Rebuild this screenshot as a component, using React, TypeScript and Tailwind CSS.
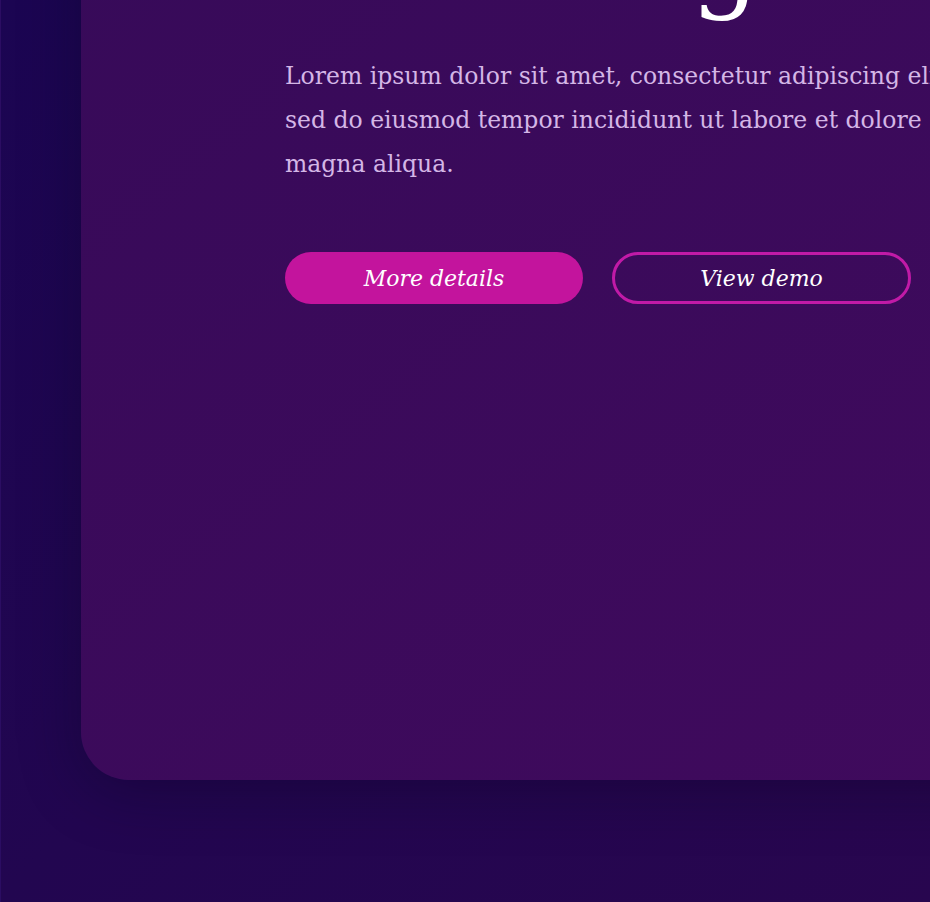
export default function App() {
  return (
    <div className="h-[902px] w-full overflow-hidden border-l border-[#2b0d62] bg-gradient-to-br from-[#1b0552] via-[#220650] to-[#28064f] pl-[80px] font-['DejaVu_Serif',serif]">
      <div className="w-[1100px] rounded-bl-[48px] bg-gradient-to-br from-[#370a59] to-[#400a5d] pb-[476px] pl-[204px] shadow-[0_10px_60px_rgba(8,0,30,0.35)]">
        <h1 className="-mt-[94px] whitespace-nowrap text-[108px] leading-none text-white">
          Amazing things
        </h1>
        <p className="mt-[40px] whitespace-nowrap text-[23.5px] leading-[44px] text-[#d4b6e6]">
          Lorem ipsum dolor sit amet, consectetur adipiscing elit,
          <br />
          sed do eiusmod tempor incididunt ut labore et dolore
          <br />
          magna aliqua.
        </p>
        <div className="mt-[66px] flex gap-[29px]">
          <button
            type="button"
            className="h-[52px] w-[298px] rounded-full bg-[#c3149d] text-[22px] italic text-white"
          >
            More details
          </button>
          <button
            type="button"
            className="h-[52px] w-[299px] rounded-full border-[3px] border-[#c11aa7] text-[22px] italic text-white"
          >
            View demo
          </button>
        </div>
      </div>
    </div>
  )
}
